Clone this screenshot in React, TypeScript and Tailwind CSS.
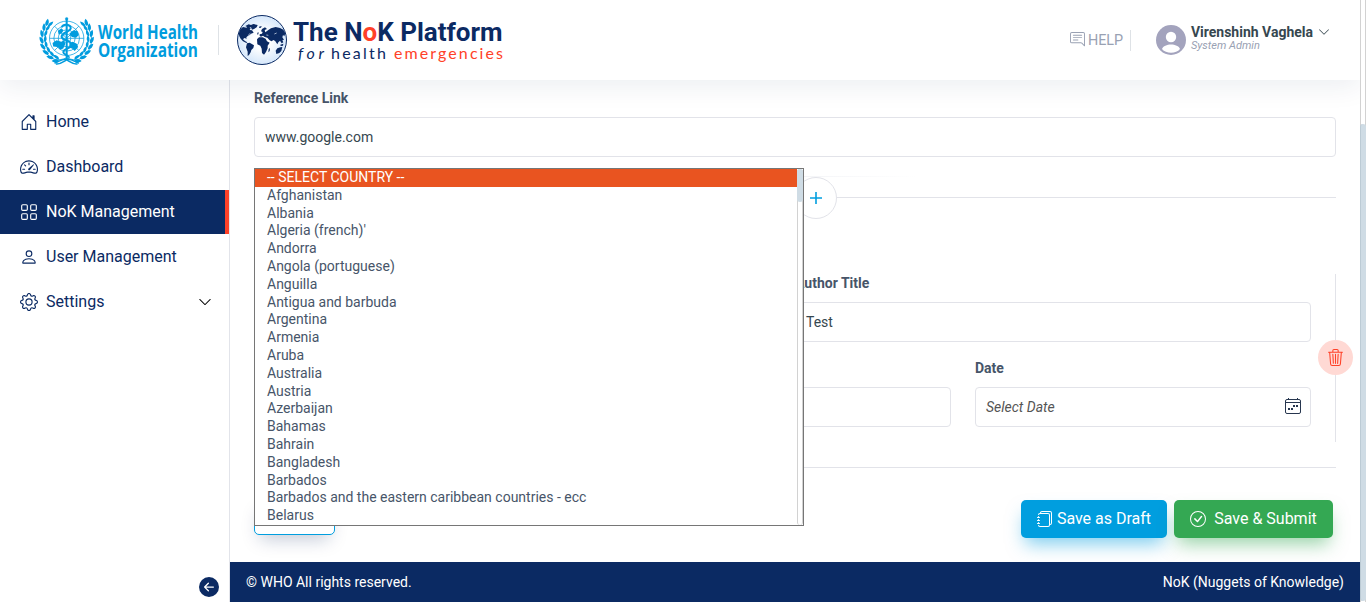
import React from "react";
import {
  BsArrowLeftCircleFill,
  BsChatRightText,
  BsCheckCircle,
  BsChevronDown,
  BsGear,
  BsGrid,
  BsHouseDoor,
  BsJournals,
  BsPerson,
  BsSpeedometer2,
  BsTrash3,
} from "react-icons/bs";
import type { IconType } from "react-icons";

const countries = [
  "Afghanistan",
  "Albania",
  "Algeria (french)'",
  "Andorra",
  "Angola (portuguese)",
  "Anguilla",
  "Antigua and barbuda",
  "Argentina",
  "Armenia",
  "Aruba",
  "Australia",
  "Austria",
  "Azerbaijan",
  "Bahamas",
  "Bahrain",
  "Bangladesh",
  "Barbados",
  "Barbados and the eastern caribbean countries - ecc",
  "Belarus",
];

const leafAngles = [112, 127, 142, 157, 172, 187, 202, 215];

function WhoEmblem() {
  return (
    <svg viewBox="1 4 190 166" className="h-14 w-16 shrink-0" fill="none" stroke="#009cde">
      <g strokeWidth="2.2">
        <circle cx="98" cy="82" r="51" />
        <circle cx="98" cy="82" r="38" />
        <circle cx="98" cy="82" r="25" />
        <circle cx="98" cy="82" r="12" />
        <path d="M47 82h102M62 46l72 72M134 46l-72 72" />
      </g>
      <g fill="#009cde" stroke="none">
        <path d="M56 96l12-8 14 4 8-4 4 10-6 14-10 4-6-8-14-2z" />
        <path d="M106 68l12-10 12 2 4 12-8 8-12-2-6-4zM106 96l10-4 12 6 4 10-10 12-8-8-8-2z" />
        <path d="M72 60l10-8 6 5-4 10-10 4z" />
      </g>
      <path d="M98 24v122" strokeWidth="6" />
      <circle cx="98" cy="24" r="4" fill="#009cde" />
      <path
        d="M84 50c0-12 24-10 26 0 3 13-27 13-27 27 0 11 29 10 29 24 0 12-24 11-24 22 0 8 17 8 17 17"
        strokeWidth="6"
      />
      {[1, -1].map((side) => (
        <g key={side} transform={side === 1 ? undefined : "translate(196 0) scale(-1 1)"}>
          <path d="M98 140C70 152 50 144 38 126C22 104 20 80 32 54" strokeWidth="2.5" />
          {leafAngles.map((angle) => (
            <g key={angle} transform={`rotate(${angle} 98 82) translate(168 82)`}>
              <path d="M0-4C7-6 12 5 9 16C1 12-3 5 0-4Z" fill="#009cde" stroke="none" />
              <path d="M-3-2C-11 0-13 9-9 18C-3 13-1 6-3-2Z" fill="#009cde" stroke="none" />
            </g>
          ))}
          <path d="M92 146c14-8 28 4 42 10M66 158c12 2 20-5 32-12" strokeWidth="4.5" />
        </g>
      ))}
    </svg>
  );
}

function GlobeLogo() {
  return (
    <svg viewBox="0 0 168 168" className="h-14 w-14 shrink-0">
      <defs>
        <radialGradient id="globe">
          <stop offset="0.35" stopColor="#fff" />
          <stop offset="1" stopColor="#d5e7fb" />
        </radialGradient>
      </defs>
      <circle cx="84" cy="84" r="73.5" fill="url(#globe)" stroke="#0b2a63" strokeWidth="3" />
      <g fill="#0b2a63">
        <path d="M14 65L19 52L27 45L37 47L43 43L50 49L47 54L54 55L59 62L51 65L47 69L42 71L37 76L38 80L31 78L27 82L33 87L40 91L37 93L27 88L20 80L16 73Z" />
        <path d="M34 42L44 37L51 39L58 36L71 39L68 46L60 51L54 53L51 46L43 47Z" />
        <path d="M39 94L47 92L60 100L58 108L52 114L50 121L45 129L41 132L41 119L36 106Z" />
        <path d="M69 82L75 76L86 76L95 80L99 88L107 92L101 101L101 109L96 120L90 128L84 123L83 110L79 101L70 97Z" />
        <path d="M77 72L77 67L84 65L86 60L81 58L84 51L93 46L99 51L92 54L94 61L103 54L111 49L125 45L138 48L148 53L154 64L151 73L147 69L145 76L150 83L145 85L148 91L143 94L138 86L133 91L130 97L124 88L119 84L112 88L106 84L100 77L92 75L87 71L81 74Z" />
        <path d="M125 116L130 109L139 106L145 105L142 117L136 123L127 126ZM139 98L148 95L147 101L140 102ZM104 112L108 107L107 117L103 121ZM136 132L140 128L137 134Z" />
        <path d="M75 44l8-2-2 5-5 1zM70 62l4-1-1 6-3 1z" />
      </g>
      <path d="M43 69l6-5M121 66l7-3M97 69l6 1" stroke="#edf5ff" strokeWidth="2" />
    </svg>
  );
}

function CalendarIcon() {
  return (
    <svg viewBox="0 0 16 16" className="-mt-[2px] size-4" fill="none" stroke="#27364f">
      <rect x="0.5" y="1.5" width="15" height="14" rx="1.5" />
      <path d="M0.5 4.5h15M3.5 0v1.5M12.5 0v1.5" />
      <path d="M3 11h2M6 11h2M8 8h2M11 8h2" strokeWidth="2" />
    </svg>
  );
}

function Header() {
  return (
    <header className="relative z-20 flex h-20 w-[1360px] shrink-0 items-center bg-white pl-[34px] shadow-[0_8px_24px_rgba(20,45,80,0.07)]">
      <WhoEmblem />
      <svg width="102" height="44" className="shrink-0 overflow-visible" role="img">
        <g fill="#009cde" fontFamily="Open Sans, sans-serif" fontWeight="700" fontSize="19.4">
          <text x="0" y="21" textLength="100" lengthAdjust="spacingAndGlyphs">World Health</text>
          <text x="0" y="38.7" textLength="100" lengthAdjust="spacingAndGlyphs">Organization</text>
        </g>
      </svg>
      <div className="ml-[18px] h-[30px] w-px bg-[#dee2e6]" />
      <div className="ml-[15px] flex">
        <GlobeLogo />
        <svg width="214" height="56" className="shrink-0 overflow-visible">
          <text x="3" y="29" fill="#0b2a63" fontFamily="Roboto, sans-serif" fontWeight="700" fontSize="26" textLength="209.5">
            The N<tspan fill="#ff4128">o</tspan>K Platform
          </text>
          <g fontFamily="Lato, sans-serif" fontSize="16">
            <text x="8" y="46.5" fill="#0b2a63" fontStyle="italic" textLength="26">for</text>
            <text x="41" y="46.5" fill="#0b2a63" textLength="55">health</text>
            <text x="104" y="46.5" fill="#ff4128" textLength="109">emergencies</text>
          </g>
        </svg>
      </div>
      <div className="ml-auto flex items-center pr-[30px]">
        <div className="flex h-[21px] items-center gap-[3px] border-r border-[#dee2e6] pr-2 text-[14.4px] text-[#99a1b3]">
          <BsChatRightText size={15} className="-mt-[2px]" />
          <span className="w-[34px] pt-px leading-5">HELP</span>
        </div>
        <svg viewBox="0 0 30 30" className="ml-[25px] size-[30px]">
          <circle cx="15" cy="15" r="15" fill="#a3a3bd" />
          <circle cx="15" cy="12" r="5.2" fill="#fff" />
          <path d="M6 24c2-6 16-6 18 0-4 5-14 5-18 0Z" fill="#fff" />
        </svg>
        <div className="-mt-[4px] ml-[5px] flex flex-col">
          <div className="flex items-center gap-[5px] text-sm leading-4 font-bold text-[#36474f]">
            <span className="whitespace-nowrap">Virenshinh Vaghela</span>
            <BsChevronDown size={12} />
          </div>
          <span className="text-[11px] leading-3 text-[#99a1b3] italic">System Admin</span>
        </div>
      </div>
    </header>
  );
}

type NavItem = { label: string; icon: IconType; active?: boolean; expandable?: boolean };

const navItems: NavItem[] = [
  { label: "Home", icon: BsHouseDoor },
  { label: "Dashboard", icon: BsSpeedometer2 },
  { label: "NoK Management", icon: BsGrid, active: true },
  { label: "User Management", icon: BsPerson },
  { label: "Settings", icon: BsGear, expandable: true },
];

function Sidebar() {
  return (
    <aside className="flex w-[230px] shrink-0 flex-col border-r border-[#e2e4ea] bg-white pt-5">
      <nav className="flex flex-col gap-px">
        {navItems.map(({ label, icon: Icon, active, expandable }) => (
          <a
            key={label}
            className={
              active
                ? "flex h-11 items-center border-r-4 border-[#ff4128] bg-[#0b2a63] pl-5 text-white"
                : "flex h-11 items-center pr-[17px] pl-5 text-[#0b2a63]"
            }
          >
            <Icon size={18} />
            <span className="-mt-px ml-2 text-base leading-5">{label}</span>
            {expandable && <BsChevronDown size={14} className="ml-auto text-black" />}
          </a>
        ))}
      </nav>
      <BsArrowLeftCircleFill size={20} className="mt-auto mr-[10px] mb-[5px] self-end text-[#0b2a63]" />
    </aside>
  );
}

function Field({ label, value }: { label?: string; value?: string }) {
  return (
    <div className="flex flex-col gap-[11px]">
      <label className="h-4 text-sm leading-4 font-bold text-[#475569]">{label}</label>
      <div className="flex h-10 items-center rounded border border-[#e2e3e9] bg-white px-[10px] text-sm text-[#36474f]">
        {value}
      </div>
    </div>
  );
}

function CountryList() {
  return (
    <div className="absolute top-[88px] left-6 z-10 flex h-[358px] w-[550px] border border-[#767676] bg-white text-sm">
      <ul className="min-w-0 flex-1">
        <li className="h-[17.8px] bg-[#e95420] pl-3 leading-[17.8px] text-white">-- SELECT COUNTRY --</li>
        {countries.map((country) => (
          <li key={country} className="h-[17.8px] pl-3 leading-[17.8px] text-[#475569]">
            {country}
          </li>
        ))}
      </ul>
      <div className="w-[6px] rounded-[3px] border-x border-[#d2d2d2] bg-white">
        <div className="-mx-px h-[33px] rounded-[3px] bg-[#cfdce5]" />
      </div>
    </div>
  );
}

function ReferenceForm() {
  return (
    <main className="relative flex h-[482px] flex-col overflow-hidden pr-6 pl-6">
      <div className="pt-[10px]">
        <Field label="Reference Link" value="www.google.com" />
      </div>
      <div className="mt-[19px] h-px w-[664px] bg-linear-to-r from-[#f2f3f6] from-80% to-transparent" />
      <div className="flex h-[41px] items-center">
        <div className="h-px w-[541px] bg-[#e2e3e9]" />
        <button className="flex size-[42px] shrink-0 items-center justify-center rounded-full border border-[#e2e3e9] bg-white text-[#009edf]">
          <svg viewBox="0 0 12 12" className="size-3" stroke="currentColor" strokeWidth="1.6">
            <path d="M6 0v12M0 6h12" />
          </svg>
        </button>
        <div className="h-px flex-1 bg-[#e2e3e9]" />
      </div>
      <section className="relative mt-[56px] flex h-[168px] flex-col gap-[18px] border-r border-[#e2e3e9] pt-px pr-6 pl-px">
        <div className="grid grid-cols-2 gap-6">
          <Field />
          <Field label="Author Title" value="Test" />
        </div>
        <div className="grid grid-cols-3 gap-6">
          <Field />
          <Field />
          <div className="flex flex-col gap-[11px]">
            <label className="h-4 text-sm leading-4 font-bold text-[#475569]">Date</label>
            <div className="flex h-10 items-center justify-between rounded border border-[#e2e3e9] bg-white pr-[9px] pl-[10px] text-sm text-[#36474f]">
              <span className="text-[#555] italic">Select Date</span>
              <CalendarIcon />
            </div>
          </div>
        </div>
        <button className="absolute top-[66px] -right-[18px] flex size-[35px] items-center justify-center rounded-full bg-[#ffd9d4] text-[#ff4128]">
          <BsTrash3 size={17} />
        </button>
      </section>
      <hr className="mt-[25px] border-[#e2e3e9]" />
      <div className="mt-8 flex items-start pr-[3px]">
        <button className="-mt-[3px] h-[38px] w-[81px] rounded-[5px] border border-[#009edf] bg-white shadow-[0_10px_18px_-6px_rgba(11,41,97,0.25)]" />
        <button className="ml-auto flex h-[38px] w-[146px] items-center justify-center gap-1 rounded-[5px] bg-[#009edf] text-base text-white shadow-[0_10px_18px_-4px_rgba(0,158,223,0.5)]">
          <BsJournals size={16} />
          <span className="whitespace-nowrap">Save as Draft</span>
        </button>
        <button className="ml-[7px] flex h-[38px] w-[159px] items-center justify-center gap-2 rounded-[5px] bg-[#34a853] text-base text-white shadow-[0_10px_18px_-4px_rgba(52,168,83,0.5)]">
          <BsCheckCircle size={16} />
          <span className="whitespace-nowrap">Save &amp; Submit</span>
        </button>
      </div>
      <CountryList />
    </main>
  );
}

export default function App() {
  return (
    <div className="flex h-[602px] w-[1366px] overflow-hidden bg-white font-['Roboto',sans-serif]">
      <div className="flex w-[1360px] shrink-0 flex-col">
        <Header />
        <div className="flex min-h-0 flex-1">
          <Sidebar />
          <div className="flex w-[1130px] flex-col">
            <ReferenceForm />
            <footer className="flex h-10 items-center justify-between bg-[#0b2a63] px-4 text-sm text-white">
              <span>© WHO All rights reserved.</span>
              <span>NoK (Nuggets of Knowledge)</span>
            </footer>
          </div>
        </div>
      </div>
      <div className="relative z-30 w-[6px] border-x border-[#d2d2d2] bg-white pt-[124px]">
        <div className="-mx-px h-[477px] rounded-[3px] border-l border-[#bccbd5] bg-[#cfdce5]" />
      </div>
    </div>
  );
}
